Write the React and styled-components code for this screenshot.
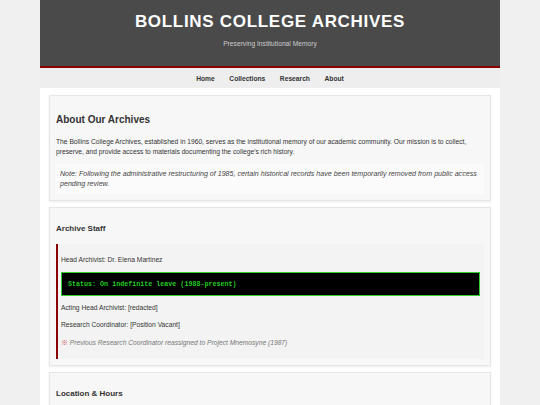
import styled, { createGlobalStyle } from "styled-components";

const GlobalStyle = createGlobalStyle`
  html, body {
    margin: 0;
    padding: 0;
    background: #f0f0f0;
    font-family: "Liberation Sans", Arial, sans-serif;
    color: #333;
  }
`;

const Page = styled.div`
  width: 460px;
  margin: 0 auto;
  min-height: 405px;
  background: #fff;
`;

const Header = styled.header`
  height: 66px;
  background: #4a4a4a;
  border-bottom: 2px solid #8b0000;
  display: flex;
  flex-direction: column;
  align-items: center;
  box-sizing: content-box;
`;

const Title = styled.h1`
  margin: 11px 0 0;
  font-size: 17px;
  line-height: 21px;
  font-weight: 700;
  letter-spacing: 0.7px;
  color: #fff;
`;

const Subtitle = styled.p`
  margin: 7px 0 0;
  font-size: 6.7px;
  line-height: 10px;
  color: #ccc;
`;

const Nav = styled.nav`
  height: 20px;
  background: #eeeeee;
  display: flex;
  justify-content: center;
  align-items: center;
  gap: 14.5px;
`;

const NavLink = styled.a`
  font-size: 6.7px;
  font-weight: 700;
  color: #333;
  text-decoration: none;
`;

const Main = styled.main`
  padding: 7px 9px;
  display: flex;
  flex-direction: column;
  gap: 6px;
`;

const Card = styled.section`
  background: #f7f7f7;
  border: 1px solid #e6e6e6;
  box-shadow: 0 1px 2px rgba(0, 0, 0, 0.08);
  padding: 6px;
`;

const CardTitle = styled.h2`
  margin: ${(p) => (p.$small ? "10px 0 10px" : "12px 0 11px")};
  font-size: ${(p) => (p.$small ? "8px" : "10px")};
  line-height: ${(p) => (p.$small ? "10px" : "12px")};
  font-weight: 700;
  color: #333;
`;

const Text = styled.p`
  margin: 0;
  font-size: 6.7px;
  line-height: 10px;
  color: #333;
`;

const Note = styled.div`
  margin-top: 7px;
  padding: 5px 4px 4px;
  background: #fbfbfb;
  font-size: 7.1px;
  line-height: 10.3px;
  font-style: italic;
  color: #444;
`;

const StaffBox = styled.div`
  border-left: 2px solid #8b0000;
  background: #f3f3f3;
  padding: 4px 4px 4px 3px;
`;

const StaffLine = styled.p`
  margin: 7px 0;
  font-size: 6.7px;
  line-height: 10px;
  color: ${(p) => (p.$muted ? "#777" : "#333")};
  font-style: ${(p) => (p.$muted ? "italic" : "normal")};
`;

const Mark = styled.span`
  font-family: "Noto Sans CJK JP", "DejaVu Sans", sans-serif;
  color: #d05555;
  font-style: normal;
  font-size: 7px;
`;

const Status = styled.div`
  margin: 7px 0;
  background: #000;
  border: 1px solid #33cc33;
  padding: 6px;
  font-family: "Liberation Mono", "Courier New", monospace;
  font-size: 6.7px;
  line-height: 10px;
  font-weight: 700;
  color: #22cc22;
`;

export default function App() {
  return (
    <>
      <GlobalStyle />
      <Page>
        <Header>
          <Title>BOLLINS COLLEGE ARCHIVES</Title>
          <Subtitle>Preserving Institutional Memory</Subtitle>
        </Header>
        <Nav>
          <NavLink href="#">Home</NavLink>
          <NavLink href="#">Collections</NavLink>
          <NavLink href="#">Research</NavLink>
          <NavLink href="#">About</NavLink>
        </Nav>
        <Main>
          <Card>
            <CardTitle>About Our Archives</CardTitle>
            <Text>
              The Bollins College Archives, established in 1960, serves as the institutional memory of our
              academic community. Our mission is to collect, preserve, and provide access to materials
              documenting the college's rich history.
            </Text>
            <Note>
              Note: Following the administrative restructuring of 1985, certain historical records have been
              temporarily removed from public access pending review.
            </Note>
          </Card>
          <Card>
            <CardTitle $small>Archive Staff</CardTitle>
            <StaffBox>
              <StaffLine>Head Archivist: Dr. Elena Martinez</StaffLine>
              <Status>Status: On indefinite leave (1988-present)</Status>
              <StaffLine>Acting Head Archivist: [redacted]</StaffLine>
              <StaffLine>Research Coordinator: [Position Vacant]</StaffLine>
              <StaffLine $muted>
                <Mark>※</Mark> Previous Research Coordinator reassigned to Project Mnemosyne (1987)
              </StaffLine>
            </StaffBox>
          </Card>
          <Card>
            <CardTitle $small>Location &amp; Hours</CardTitle>
            <Text>
              Library Building, Lower Level, Room B-12. Open Monday through Friday, 9:00 AM to 4:00 PM.
            </Text>
          </Card>
        </Main>
      </Page>
    </>
  );
}
